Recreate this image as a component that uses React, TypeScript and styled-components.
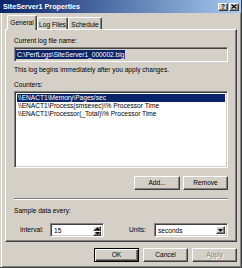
import React from 'react';
import styled, { createGlobalStyle } from 'styled-components';

const Global = createGlobalStyle`
  html, body { margin: 0; padding: 0; background: #d4d0c8; }
  body { font-family: "Liberation Sans", Arial, sans-serif; color: #000; }
  * { box-sizing: border-box; }
`;

const raised = `
  border: 1px solid;
  border-color: #fff #404040 #404040 #fff;
  box-shadow: inset -1px -1px #808080;
`;

const sunken = `
  border: 1px solid;
  border-color: #808080 #fff #fff #808080;
  box-shadow: inset 1px 1px #404040, inset -1px -1px #d4d0c8;
`;

const Window = styled.div`
  width: 242px;
  height: 268px;
  display: flex;
  flex-direction: column;
  background: #d4d0c8;
  border-right: 1px solid #404040;
  border-bottom: 1px solid #404040;
  box-shadow: inset -1px -1px #808080;
`;

const TitleBar = styled.div`
  height: 13px;
  flex-shrink: 0;
  display: flex;
  align-items: center;
  justify-content: space-between;
  padding: 0 2px 0 3px;
  background: linear-gradient(to right, #0a246a, #a6caf0);
`;

const Title = styled.span`
  color: #fff;
  font-weight: bold;
  font-size: 7.2px;
  line-height: 13px;
  white-space: nowrap;
`;

const CaptionGroup = styled.div`
  display: flex;
  gap: 1px;
`;

const CaptionButton = styled.div`
  width: 10px;
  height: 8px;
  background: #d4d0c8;
  ${raised}
  display: flex;
  align-items: center;
  justify-content: center;
  font-size: 6.5px;
  font-weight: bold;
  line-height: 6px;
`;

const Body = styled.div`
  flex: 1;
  display: flex;
  flex-direction: column;
  padding: 2px 4px 0 4px;
  border-left: 1px solid #d4d0c8;
  box-shadow: inset 1px 0 #fff;
`;

const TabRow = styled.div`
  height: 14px;
  display: flex;
  align-items: flex-end;
  padding-left: 2px;
`;

const Tab = styled.div<{ $active?: boolean; $w: number }>`
  position: relative;
  z-index: ${(p) => (p.$active ? 1 : 0)};
  width: ${(p) => p.$w}px;
  height: ${(p) => (p.$active ? 15 : 12)}px;
  margin-bottom: ${(p) => (p.$active ? -1 : 0)}px;
  background: #d4d0c8;
  border-top: 1px solid #fff;
  border-left: 1px solid #fff;
  border-right: 1px solid #404040;
  box-shadow: inset -1px 0 #808080;
  border-radius: 2px 2px 0 0;
  font-size: 6.6px;
  line-height: 8px;
  padding-top: ${(p) => (p.$active ? 3 : 3)}px;
  text-align: center;
  white-space: nowrap;
`;

const Panel = styled.div`
  height: 213px;
  display: flex;
  flex-direction: column;
  border-top: 1px solid #fff;
  border-left: 1px solid #fff;
  border-right: 1px solid #404040;
  border-bottom: 1px solid #404040;
  box-shadow: inset -1px -1px #808080;
  padding: 7px 8px 0 8px;
`;

const Label = styled.div<{ $mt?: number }>`
  font-size: 6.6px;
  line-height: 8px;
  height: 8px;
  margin-top: ${(p) => p.$mt ?? 0}px;
  white-space: nowrap;
`;

const ReadOnlyField = styled.div`
  margin-top: 2px;
  height: 15px;
  ${sunken}
  background: #d4d0c8;
  display: flex;
  align-items: center;
  padding: 0 1px;
`;

const Selected = styled.span`
  background: #0a246a;
  color: #fff;
  font-size: 6.6px;
  line-height: 9px;
  padding: 0 1px;
  white-space: nowrap;
`;

const ListBox = styled.div`
  margin-top: 2px;
  height: 77px;
  ${sunken}
  background: #fff;
  padding: 2px;
  display: flex;
  flex-direction: column;
`;

const ListItem = styled.div<{ $sel?: boolean }>`
  height: 8px;
  font-size: 6.6px;
  line-height: 8px;
  padding-left: 1px;
  white-space: nowrap;
  overflow: hidden;
  background: ${(p) => (p.$sel ? '#0a246a' : 'transparent')};
  color: ${(p) => (p.$sel ? '#fff' : '#000')};
`;

const ButtonRow = styled.div<{ $mt: number; $gap: number }>`
  margin-top: ${(p) => p.$mt}px;
  display: flex;
  justify-content: flex-end;
  gap: ${(p) => p.$gap}px;
`;

const Button = styled.div<{ $w: number; $default?: boolean; $disabled?: boolean }>`
  width: ${(p) => p.$w}px;
  height: 14px;
  background: #d4d0c8;
  display: flex;
  align-items: center;
  justify-content: center;
  font-size: 6.6px;
  line-height: 8px;
  color: ${(p) => (p.$disabled ? '#808080' : '#000')};
  text-shadow: ${(p) => (p.$disabled ? '1px 1px #fff' : 'none')};
  ${(p) =>
    p.$default
      ? `border: 1px solid #000; box-shadow: inset 1px 1px #fff, inset -1px -1px #404040, inset -2px -2px #808080;`
      : raised}
`;

const Separator = styled.div`
  margin-top: 8px;
  height: 2px;
  border-top: 1px solid #808080;
  border-bottom: 1px solid #fff;
`;

const FieldRow = styled.div`
  margin-top: 8px;
  height: 14px;
  display: flex;
  align-items: center;
  padding-left: 6px;
`;

const FieldLabel = styled.div<{ $w: number; $ml?: number }>`
  width: ${(p) => p.$w}px;
  margin-left: ${(p) => p.$ml ?? 0}px;
  font-size: 6.6px;
  line-height: 8px;
  white-space: nowrap;
`;

const InputBox = styled.div<{ $w?: number }>`
  ${(p) => (p.$w ? `width: ${p.$w}px;` : 'flex: 1;')}
  height: 14px;
  ${sunken}
  background: #fff;
  display: flex;
  align-items: stretch;
  padding: 2px 2px 2px 2px;
`;

const InputText = styled.div`
  flex: 1;
  font-size: 6.6px;
  line-height: 10px;
  padding-left: 1px;
  white-space: nowrap;
`;

const SpinCol = styled.div`
  width: 8px;
  display: flex;
  flex-direction: column;
`;

const SpinHalf = styled.div`
  flex: 1;
  background: #d4d0c8;
  ${raised}
  display: flex;
  align-items: center;
  justify-content: center;
`;

const DropButton = styled.div`
  width: 9px;
  background: #d4d0c8;
  ${raised}
  display: flex;
  align-items: center;
  justify-content: center;
`;

const Arrow = ({ up }: { up?: boolean }) => (
  <svg width="5" height="3" viewBox="0 0 5 3" style={{ display: 'block' }}>
    <path d={up ? 'M2.5 0 L5 3 L0 3 Z' : 'M0 0 L5 0 L2.5 3 Z'} fill="#000" />
  </svg>
);

const CloseGlyph = () => (
  <svg width="6" height="5" viewBox="0 0 6 5" style={{ display: 'block' }}>
    <path d="M0.5 0.5 L5.5 4.5 M5.5 0.5 L0.5 4.5" stroke="#000" strokeWidth="1.2" />
  </svg>
);

export default function App() {
  return (
    <>
      <Global />
      <Window>
        <TitleBar>
          <Title>SiteServer1 Properties</Title>
          <CaptionGroup>
            <CaptionButton>?</CaptionButton>
            <CaptionButton>
              <CloseGlyph />
            </CaptionButton>
          </CaptionGroup>
        </TitleBar>
        <Body>
          <TabRow>
            <Tab $active $w={30}>General</Tab>
            <Tab $w={31}>Log Files</Tab>
            <Tab $w={34}>Schedule</Tab>
          </TabRow>
          <Panel>
            <Label>Current log file name:</Label>
            <ReadOnlyField>
              <Selected>C:\PerfLogs\SiteServer1_000002.blg</Selected>
            </ReadOnlyField>
            <Label $mt={4}>This log begins immediately after you apply changes.</Label>
            <Label $mt={7}>Counters:</Label>
            <ListBox>
              <ListItem $sel>\\ENACT1\Memory\Pages/sec</ListItem>
              <ListItem>\\ENACT1\Process(smsexec)\% Processor Time</ListItem>
              <ListItem>\\ENACT1\Processor(_Total)\% Processor Time</ListItem>
            </ListBox>
            <ButtonRow $mt={8} $gap={3}>
              <Button $w={46}>Add...</Button>
              <Button $w={45}>Remove</Button>
            </ButtonRow>
            <Separator />
            <Label $mt={7}>Sample data every:</Label>
            <FieldRow>
              <FieldLabel $w={30}>Interval:</FieldLabel>
              <InputBox $w={54}>
                <InputText>15</InputText>
                <SpinCol>
                  <SpinHalf>
                    <Arrow up />
                  </SpinHalf>
                  <SpinHalf>
                    <Arrow />
                  </SpinHalf>
                </SpinCol>
              </InputBox>
              <FieldLabel $w={25} $ml={25}>Units:</FieldLabel>
              <InputBox>
                <InputText>seconds</InputText>
                <DropButton>
                  <Arrow />
                </DropButton>
              </InputBox>
            </FieldRow>
          </Panel>
          <ButtonRow $mt={6} $gap={4}>
            <Button $w={45} $default>OK</Button>
            <Button $w={45}>Cancel</Button>
            <Button $w={45} $disabled>Apply</Button>
          </ButtonRow>
        </Body>
      </Window>
    </>
  );
}
